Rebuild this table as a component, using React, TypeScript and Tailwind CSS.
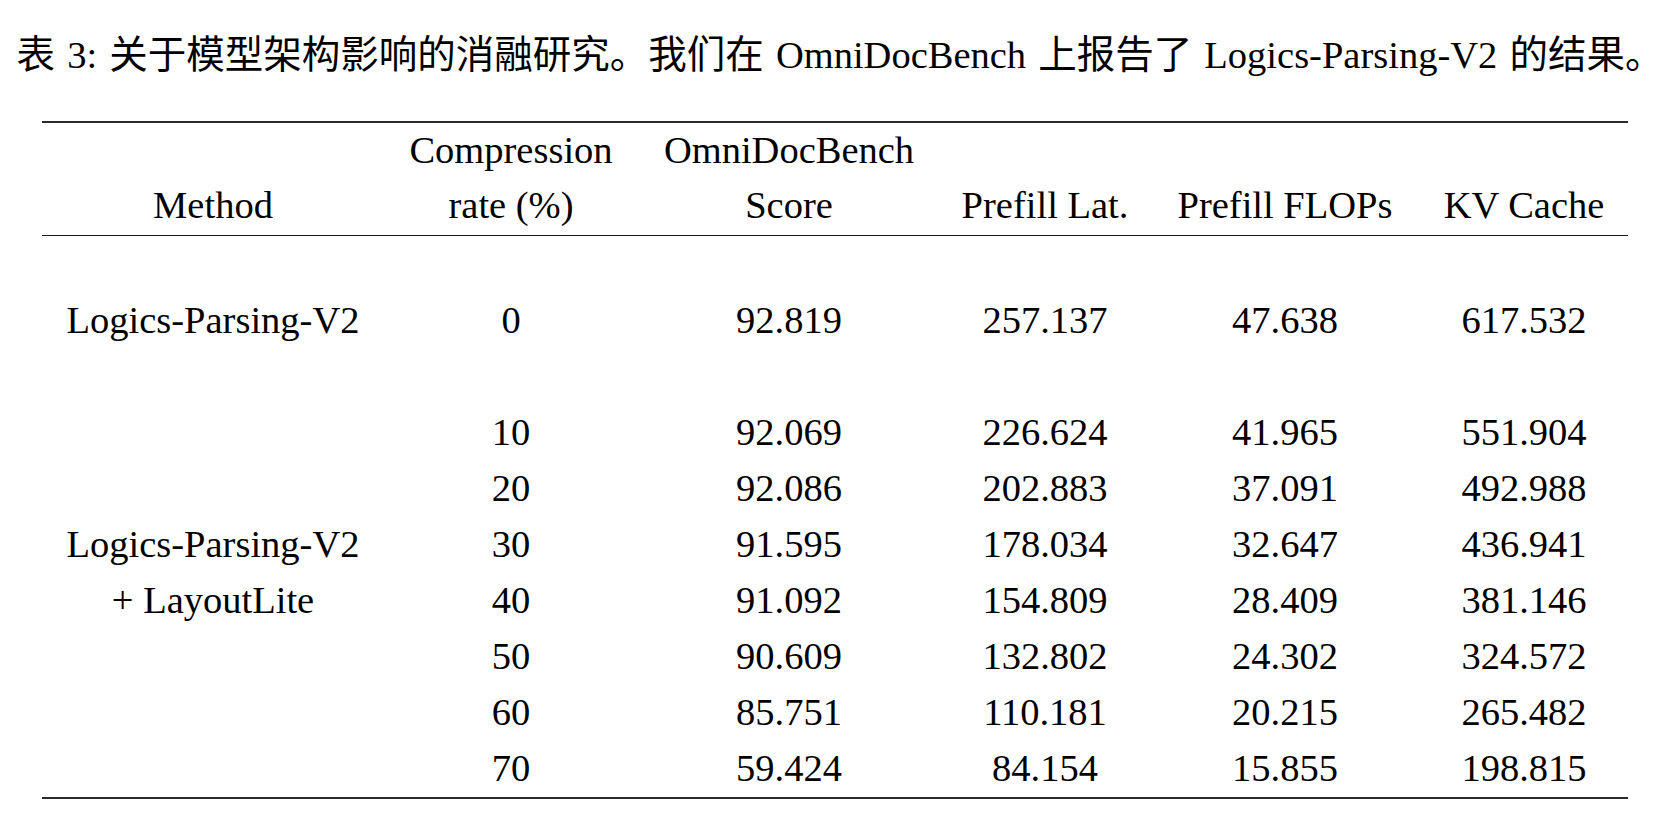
import React from "react";

const rows: [string, string, string, string, string, string][] = [
  ["", "10", "92.069", "226.624", "41.965", "551.904"],
  ["", "20", "92.086", "202.883", "37.091", "492.988"],
  ["Logics-Parsing-V2", "30", "91.595", "178.034", "32.647", "436.941"],
  ["+ LayoutLite", "40", "91.092", "154.809", "28.409", "381.146"],
  ["", "50", "90.609", "132.802", "24.302", "324.572"],
  ["", "60", "85.751", "110.181", "20.215", "265.482"],
  ["", "70", "59.424", "84.154", "15.855", "198.815"],
];

const gridCls =
  "grid grid-cols-[342px_254px_302px_210px_270px_208px] text-center";

function Row({ cells }: { cells: string[] }) {
  return (
    <div className={`${gridCls} h-[56px] leading-[56px]`}>
      {cells.map((c, i) => (
        <div key={i} className="whitespace-nowrap">
          {c}
        </div>
      ))}
    </div>
  );
}

export default function App() {
  return (
    <div
      className="w-[1680px] h-[824px] bg-white text-black text-[38.5px] overflow-hidden"
      style={{ fontFamily: '"Liberation Serif", "Noto Sans CJK SC", serif' }}
    >
      <div className="pt-[27px] h-[83px] leading-[56px] text-center whitespace-nowrap [word-spacing:2.5px]">
        表 3: 关于模型架构影响的消融研究。我们在 OmniDocBench 上报告了 Logics-Parsing-V2 的结果。
      </div>
      <div className="mx-[42px] mt-[38px] w-[1586px]">
        <div className="border-t-2 border-[#2a2a2a]" />
        <div className="pb-[2px]">
          <div className={`${gridCls} leading-[55px]`}>
            <div className="h-[110px] flex flex-col justify-end">
              <div>Method</div>
            </div>
            <div className="whitespace-nowrap">
              <div>Compression</div>
              <div>rate (%)</div>
            </div>
            <div className="whitespace-nowrap">
              <div>OmniDocBench</div>
              <div>Score</div>
            </div>
            <div className="h-[110px] flex flex-col justify-end whitespace-nowrap">
              <div>Prefill Lat.</div>
            </div>
            <div className="h-[110px] flex flex-col justify-end whitespace-nowrap">
              <div>Prefill FLOPs</div>
            </div>
            <div className="h-[110px] flex flex-col justify-end whitespace-nowrap">
              <div>KV Cache</div>
            </div>
          </div>
        </div>
        <div className="border-t-[1.5px] border-[#1a1a1a]" />
        <div className="h-[56px]" />
        <Row cells={["Logics-Parsing-V2", "0", "92.819", "257.137", "47.638", "617.532"]} />
        <div className="h-[56px]" />
        {rows.map((r, i) => (
          <Row key={i} cells={r} />
        ))}
        <div className="mt-[0.5px] border-t-2 border-[#2a2a2a]" />
      </div>
    </div>
  );
}
